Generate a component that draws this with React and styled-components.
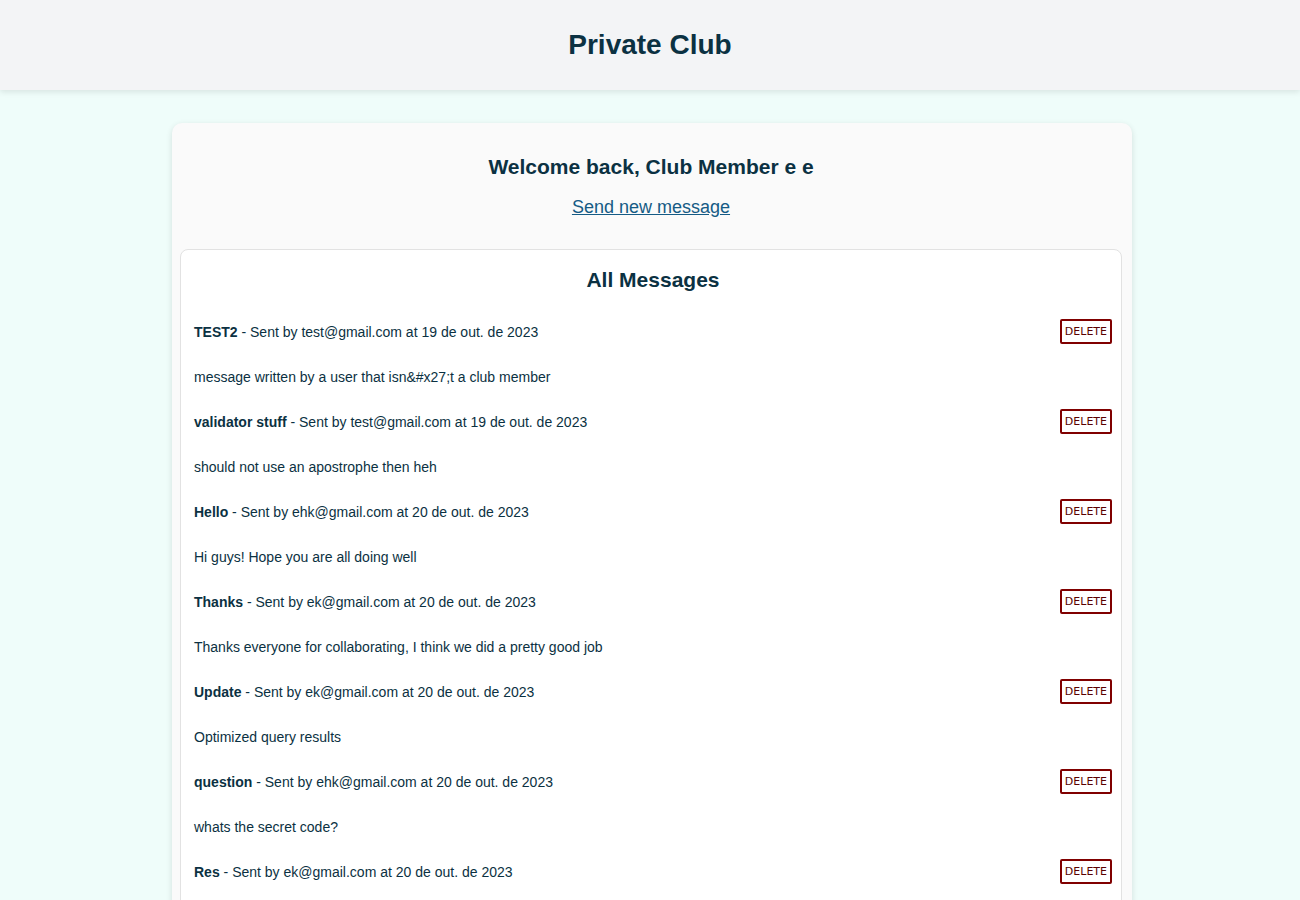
import styled, { createGlobalStyle } from "styled-components";

const messages = [
  {
    id: 1,
    title: "TEST2",
    author: "test@gmail.com",
    date: "19 de out. de 2023",
    text: "message written by a user that isn&#x27;t a club member",
  },
  {
    id: 2,
    title: "validator stuff",
    author: "test@gmail.com",
    date: "19 de out. de 2023",
    text: "should not use an apostrophe then heh",
  },
  {
    id: 3,
    title: "Hello",
    author: "ehk@gmail.com",
    date: "20 de out. de 2023",
    text: "Hi guys! Hope you are all doing well",
  },
  {
    id: 4,
    title: "Thanks",
    author: "ek@gmail.com",
    date: "20 de out. de 2023",
    text: "Thanks everyone for collaborating, I think we did a pretty good job",
  },
  {
    id: 5,
    title: "Update",
    author: "ek@gmail.com",
    date: "20 de out. de 2023",
    text: "Optimized query results",
  },
  {
    id: 6,
    title: "question",
    author: "ehk@gmail.com",
    date: "20 de out. de 2023",
    text: "whats the secret code?",
  },
  {
    id: 7,
    title: "Res",
    author: "ek@gmail.com",
    date: "20 de out. de 2023",
    text: "it is a secret",
  },
];

const GlobalStyle = createGlobalStyle`
  * {
    box-sizing: border-box;
  }
  body {
    margin: 0;
    background-color: #effdfa;
    font-family: "Liberation Sans", Arial, sans-serif;
    color: #0b3142;
  }
`;

const Header = styled.header`
  height: 90px;
  display: flex;
  align-items: center;
  justify-content: center;
  background-color: #f3f4f6;
  box-shadow: 0 2px 6px rgba(0, 0, 0, 0.1);
`;

const Title = styled.h1`
  margin: 0;
  font-size: 28px;
  font-weight: 700;
  color: #0b3142;
`;

const Main = styled.main`
  width: 960px;
  margin: 33px 0 0 calc(50% - 478px);
  padding: 32px 10px 8px 8px;
  background-color: #fafafa;
  border-radius: 10px;
  box-shadow: 0 2px 6px rgba(0, 0, 0, 0.12);
  display: flex;
  flex-direction: column;
  align-items: center;
`;

const Welcome = styled.h2`
  margin: 0;
  font-size: 21px;
  line-height: 24px;
  font-weight: 700;
`;

const NewMessage = styled.a`
  margin: 17px 0 31px 0;
  font-size: 18px;
  line-height: 22px;
  color: #155b85;
  text-decoration: underline;
  cursor: pointer;
`;

const Board = styled.section`
  align-self: stretch;
  background-color: #fff;
  border: 1px solid #e2e2e2;
  border-radius: 8px;
  padding: 15px 9px 20px 13px;
`;

const BoardTitle = styled.h3`
  margin: 0 0 14px 0;
  text-align: center;
  font-size: 21px;
  line-height: 30px;
  font-weight: 700;
`;

const Row = styled.div`
  height: 45px;
  display: flex;
  align-items: center;
  justify-content: space-between;
  font-size: 14px;
`;

const Subject = styled.b`
  font-weight: 700;
`;

const DeleteButton = styled.button`
  font-family: "DejaVu Sans", sans-serif;
  font-size: 11px;
  line-height: 13px;
  padding: 4px 3px;
  color: #5a0000;
  background-color: #fff;
  border: 2px solid #800000;
  border-radius: 2px;
  cursor: pointer;
`;

function Message({ message }) {
  return (
    <>
      <Row>
        <span>
          <Subject>{message.title}</Subject> - Sent by {message.author} at{" "}
          {message.date}
        </span>
        <DeleteButton>DELETE</DeleteButton>
      </Row>
      <Row>{message.text}</Row>
    </>
  );
}

function App() {
  return (
    <>
      <GlobalStyle />
      <Header>
        <Title>Private Club</Title>
      </Header>
      <Main>
        <Welcome>Welcome back, Club Member e e</Welcome>
        <NewMessage>Send new message</NewMessage>
        <Board>
          <BoardTitle>All Messages</BoardTitle>
          {messages.map((m) => (
            <Message key={m.id} message={m} />
          ))}
        </Board>
      </Main>
    </>
  );
}

export default App;
